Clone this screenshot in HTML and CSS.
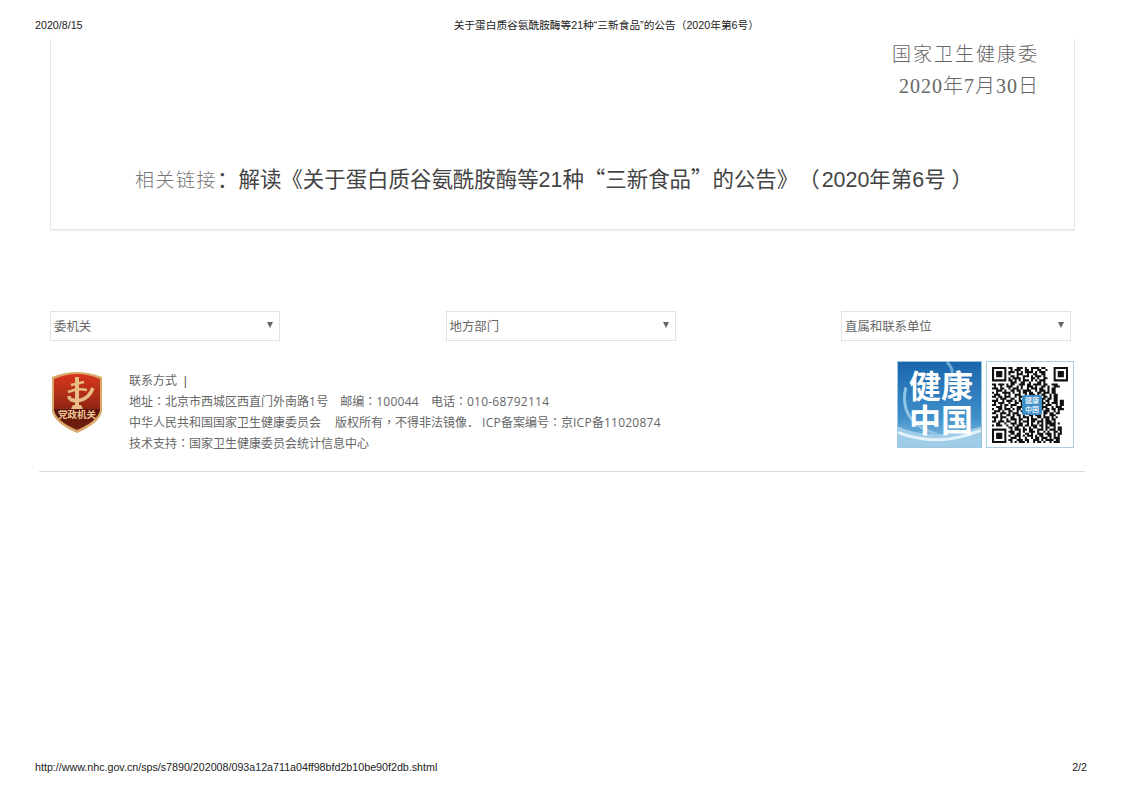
FILE: index.html
```html
<!DOCTYPE html>
<html lang="zh-CN">
<head>
<meta charset="UTF-8">
<title>关于蛋白质谷氨酰胺酶等21种“三新食品”的公告（2020年第6号）</title>
<link rel="stylesheet" href="styles.css">
</head>
<body>
<div class="page">
    <header class="print-head">
        <span>2020/8/15</span>
        <span class="print-title">关于蛋白质谷氨酰胺酶等21种“三新食品”的公告（2020年第6号）</span>
    </header>

    <section class="article">
        <p class="sign">国家卫生健康委</p>
        <p class="sign date">2020年7月30日</p>
        <p class="related"><span class="related-label">相关链接</span>：解读《关于蛋白质谷氨酰胺酶等21种<span class="cjk">“</span>三新食品<span class="cjk">”</span>的公告》<span class="paren">（</span>2020年第6号 ）</p>
    </section>

    <div class="selects">
        <div class="select">委机关<i class="arrow"></i></div>
        <div class="select">地方部门<i class="arrow"></i></div>
        <div class="select">直属和联系单位<i class="arrow"></i></div>
    </div>

    <footer class="site-foot">
        <svg class="badge" viewBox="0 0 52 62">
            <defs>
                <linearGradient id="shield" x1="0" y1="0" x2="0" y2="1">
                    <stop offset="0" stop-color="#d8351a"/>
                    <stop offset=".35" stop-color="#b12f18"/>
                    <stop offset=".62" stop-color="#8f2412"/>
                    <stop offset=".63" stop-color="#5a120a"/>
                    <stop offset="1" stop-color="#74200f"/>
                </linearGradient>
            </defs>
            <path d="M1 6Q14 1 26 1Q38 1 51 6V40Q49 52 26 62Q3 52 1 40Z" fill="#d9a868"/>
            <path d="M3 8Q15 3 26 3Q37 3 49 8V39Q47 50 26 59Q5 50 3 39Z" fill="url(#shield)"/>
            <g fill="none" stroke="#e8bd85">
                <path d="M26 6V36" stroke-width="4"/>
                <path d="M20 14L33 11" stroke-width="2.5"/>
                <path d="M17 21Q26 17 36 19" stroke-width="2.5"/>
                <path d="M18 25Q18 31 30 29Q38 27 42 17" stroke-width="3.5"/>
            </g>
            <path d="M20 38H32L30 34H22Z" fill="#e8bd85"/>
            <text class="badge-text" x="26" y="47" text-anchor="middle">党政机关</text>
        </svg>

        <div class="contact">
            <p>联系方式 &nbsp;<span class="pipe">|</span></p>
            <p>地址<span class="tc" lang="zh-Hant">：</span>北京市西城区西直门外南路<span class="num">1</span>号<span class="gap">邮编</span><span class="tc" lang="zh-Hant">：</span><span class="num">100044</span><span class="gap">电话</span><span class="tc" lang="zh-Hant">：</span><span class="num">010-68792114</span></p>
            <p>中华人民共和国国家卫生健康委员会<span class="gap-wide">版权所有</span><span class="tc" lang="zh-Hant">，</span>不得非法镜像．<span class="num icp">ICP</span>备案编号<span class="tc" lang="zh-Hant">：</span>京<span class="num">ICP</span>备<span class="num">11020874</span></p>
            <p>技术支持<span class="tc" lang="zh-Hant">：</span>国家卫生健康委员会统计信息中心</p>
        </div>

        <div class="promo">
            <div class="health">
                <svg class="health-waves" viewBox="0 0 85 87" preserveAspectRatio="none">
                    <path d="M0 66Q35 82 85 66V87H0Z" fill="#9fcde8"/>
                    <path d="M0 72Q40 88 85 70" fill="none" stroke="#e3f2fa" stroke-width="3"/>
                    <path d="M8 26Q0 62 40 74" fill="none" stroke="#8fc4e4" stroke-width="3"/>
                    <path d="M50 0Q62 12 48 22" fill="none" stroke="#6ca9d6" stroke-width="3"/>
                </svg>
                <span class="health-text">健康<br>中国</span>
            </div>
            <div class="qr">
                <svg viewBox="0 0 37 37">
                    <path fill="#111" fill-rule="evenodd" d="M0 0h7v7h-7zM1 1v5h5v-5zM2 2h3v3h-3zM30 0h7v7h-7zM31 1v5h5v-5zM32 2h3v3h-3zM0 30h7v7h-7zM1 31v5h5v-5zM2 32h3v3h-3z"/>
                    <path fill="none" stroke="#111" stroke-width="1" d="
                        M8 .5h2m2 0h3m1 0h1m2 0h4m1 0h2
                        M9 1.5h1m1 0h3m2 0h2m1 0h1m2 0h2m2 0h1
                        M8 2.5h3m1 0h1m1 0h1m1 0h4m1 0h1m1 0h3
                        M8 3.5h1m3 0h3m2 0h1m2 0h2m2 0h2
                        M9 4.5h2m1 0h1m2 0h3m1 0h1m1 0h3m1 0h1
                        M8 5.5h1m1 0h4m1 0h1m3 0h2m1 0h1m2 0h2
                        M8 6.5h2m1 0h1m1 0h1m1 0h3m1 0h1m1 0h1m1 0h3
                        M9 7.5h3m2 0h2m2 0h1m3 0h2m1 0h1
                        M0 8.5h2m1 0h3m1 0h1m1 0h2m2 0h3m1 0h2m1 0h4m1 0h2m2 0h3
                        M1 9.5h1m2 0h1m2 0h3m2 0h1m1 0h1m2 0h3m1 0h1m2 0h2m1 0h1m2 0h3
                        M0 10.5h3m1 0h2m2 0h1m1 0h3m1 0h1m2 0h1m1 0h3m1 0h2m2 0h1m1 0h2
                        M2 11.5h3m1 0h1m2 0h2m1 0h2m1 0h4m2 0h1m1 0h3m1 0h1m1 0h2
                        M0 12.5h1m1 0h1m2 0h4m1 0h1m2 0h1m1 0h2m1 0h2m2 0h2m1 0h3m1 0h2
                        M1 13.5h3m2 0h1m1 0h1m2 0h3m2 0h1m1 0h3m1 0h1m1 0h2m2 0h1m1 0h2
                        M0 14.5h2m1 0h2m1 0h3m2 0h1m1 0h2m1 0h2m2 0h3m2 0h2m1 0h1m1 0h2
                        M2 15.5h1m1 0h3m2 0h2m2 0h1m3 0h2m1 0h1m2 0h3m1 0h2m1 0h2
                        M0 16.5h3m2 0h1m1 0h3m1 0h1m1 0h2m9 0h1m1 0h2m2 0h2m1 0h2
                        M1 17.5h1m1 0h3m2 0h1m2 0h2m1 0h1m9 0h2m1 0h1m1 0h3m1 0h2
                        M0 18.5h2m2 0h1m1 0h2m1 0h3m2 0h1m9 0h1m1 0h3m2 0h1m1 0h2
                        M2 19.5h3m1 0h1m2 0h1m2 0h3m9 0h3m2 0h1m1 0h3
                        M0 20.5h1m2 0h2m1 0h3m1 0h1m1 0h2m1 0h1m8 0h1m1 0h2m1 0h2m1 0h3
                        M1 21.5h3m1 0h1m2 0h2m2 0h1m1 0h2m2 0h1m1 0h2m1 0h1m1 0h3m2 0h1m1 0h1
                        M0 22.5h2m2 0h3m1 0h1m1 0h3m2 0h2m1 0h3m2 0h1m1 0h2m1 0h2m1 0h2
                        M2 23.5h1m1 0h1m2 0h2m1 0h1m1 0h2m1 0h1m2 0h2m1 0h3m1 0h1m2 0h3
                        M0 24.5h3m1 0h3m2 0h2m2 0h1m1 0h3m1 0h1m2 0h2m1 0h3m1 0h1m1 0h1
                        M1 25.5h1m2 0h1m2 0h1m1 0h3m1 0h2m2 0h1m1 0h3m2 0h1m1 0h2m1 0h2
                        M0 26.5h2m1 0h3m1 0h2m2 0h1m1 0h1m1 0h3m1 0h2m1 0h3m1 0h3m1 0h1
                        M2 27.5h2m2 0h1m2 0h3m1 0h2m2 0h1m1 0h1m2 0h1m1 0h1m1 0h5m1 0h1
                        M0 28.5h1m1 0h3m2 0h1m2 0h1m1 0h3m1 0h2m1 0h3m1 0h2m1 0h1m1 0h3
                        M8 29.5h2m1 0h2m2 0h1m2 0h1m1 0h2m2 0h1m1 0h2m2 0h1m1 0h2
                        M9 30.5h1m1 0h3m1 0h2m1 0h2m2 0h3m1 0h1m1 0h3m1 0h2
                        M8 31.5h3m2 0h1m1 0h1m2 0h3m1 0h1m2 0h1m1 0h1m2 0h2m1 0h1
                        M9 32.5h2m1 0h2m2 0h2m1 0h1m2 0h3m1 0h3m1 0h1m1 0h2
                        M8 33.5h1m2 0h3m1 0h1m1 0h3m1 0h1m1 0h2m2 0h2m1 0h1m1 0h1
                        M9 34.5h3m1 0h1m2 0h1m2 0h1m1 0h2m1 0h3m1 0h1m1 0h3
                        M8 35.5h2m2 0h3m1 0h2m2 0h3m1 0h1m1 0h4m1 0h2
                        M9 36.5h1m1 0h1m1 0h3m1 0h1m2 0h1m1 0h2m1 0h1m2 0h1m1 0h3"/>
                </svg>
                <span class="qr-logo">健康<br>中国</span>
            </div>
        </div>
    </footer>

    <div class="print-foot">
        <span>http://www.nhc.gov.cn/sps/s7890/202008/093a12a711a04ff98bfd2b10be90f2db.shtml</span>
        <span>2/2</span>
    </div>
</div>
</body>
</html>
```

FILE: styles.css
```css
* {box-sizing: border-box;}
html, body {margin: 0;padding: 0;background: #fff;}
p {margin: 0;}
body {font-family: "Liberation Sans", "Noto Sans CJK SC", sans-serif;color: #333;}

.page {width: 1123px;height: 794px;padding: 19px 36px 0 35px;display: flex;flex-direction: column;}

.print-head {display: flex;height: 13px;font-size: 10.7px;line-height: 13px;color: #222;}
.print-title {flex: 1;text-align: center;margin-left: -48px;padding-left: 91px;}

.article {margin: 7px 0 0 15px;width: 1025px;height: 191px;border: 1px solid #e6e6e6;border-top: 0;padding: 0 35px 0 84px;box-shadow: 0 1px 1px #f0f0f0;}
.sign {text-align: right;font-size: 19px;line-height: 32px;letter-spacing: 2px;color: #666;font-weight: 300;}
.date {margin-top: -1px;font-family: "Liberation Serif", "Noto Sans CJK SC", serif;font-size: 20px;letter-spacing: 1px;}
.related {margin-top: 62px;font-size: 21.45px;line-height: 32px;color: #444;white-space: nowrap;text-spacing-trim: space-all;font-feature-settings: "chws" 0;}
.related-label {color: #777;font-size: 19px;line-height: 1;letter-spacing: 1.5px;font-weight: 300;}
.cjk {font-family: "Noto Sans CJK SC", sans-serif;line-height: 1;}
.paren {margin-right: 2px;}

.selects {margin: 81px 0 0 15px;width: 1021px;display: flex;justify-content: space-between;}
.select {position: relative;width: 230px;height: 30px;border: 1px solid #e2e2e2;padding-left: 3px;font-size: 12.4px;line-height: 31px;color: #666;}
.arrow {position: absolute;right: 6px;top: 10px;border-style: solid;border-width: 6px 3.5px 0;border-color: #666 transparent transparent;}

.site-foot {margin: 20px 0 0 4px;width: 1046px;height: 111px;padding: 0 11px 23px 12px;border-bottom: 1px solid #ddd;display: flex;align-items: flex-start;}
.badge {width: 52px;height: 62px;margin: 10px 26px 0 0;flex: none;}
.badge-text {font-size: 9.5px;font-weight: 700;fill: #edc795;}
.contact {flex: 1;padding-top: 10px;font-size: 12px;line-height: 21px;color: #666;white-space: nowrap;}
.tc {font-family: "Noto Sans CJK TC", sans-serif;line-height: 1;}
.num {font-family: "Open Sans", sans-serif;line-height: 1;letter-spacing: .25px;}
.gap {margin-left: 12px;}
.gap-wide {margin-left: 14px;}
.icp {margin-left: 3px;}
.pipe {color: #555;font-weight: 300;}

.promo {display: flex;gap: 4px;}
.health {position: relative;width: 85px;height: 87px;background: linear-gradient(#1a66ad, #3f8fca 65%, #8cc2e2);overflow: hidden;border: 1px solid #9cc6df;}
.health-waves {position: absolute;left: 0;top: 0;width: 100%;height: 100%;}
.health-text {position: relative;display: block;padding: 8px 0 0 11px;font-size: 32px;line-height: 34px;font-weight: 700;color: #fff;white-space: nowrap;}
.qr {position: relative;width: 88px;height: 87px;border: 1px solid #a9cfe6;padding: 5px 4px;}
.qr svg {display: block;width: 78px;height: 76px;}
.qr-logo {position: absolute;left: 35px;top: 33px;width: 20px;height: 20px;background: #3f8cc6;color: #dff0fa;font-size: 7px;line-height: 9px;font-weight: 700;text-align: center;padding-top: 1px;border-radius: 2px;}

.print-foot {margin-top: 289px;display: flex;justify-content: space-between;font-size: 10.7px;line-height: 13px;color: #222;}
```
